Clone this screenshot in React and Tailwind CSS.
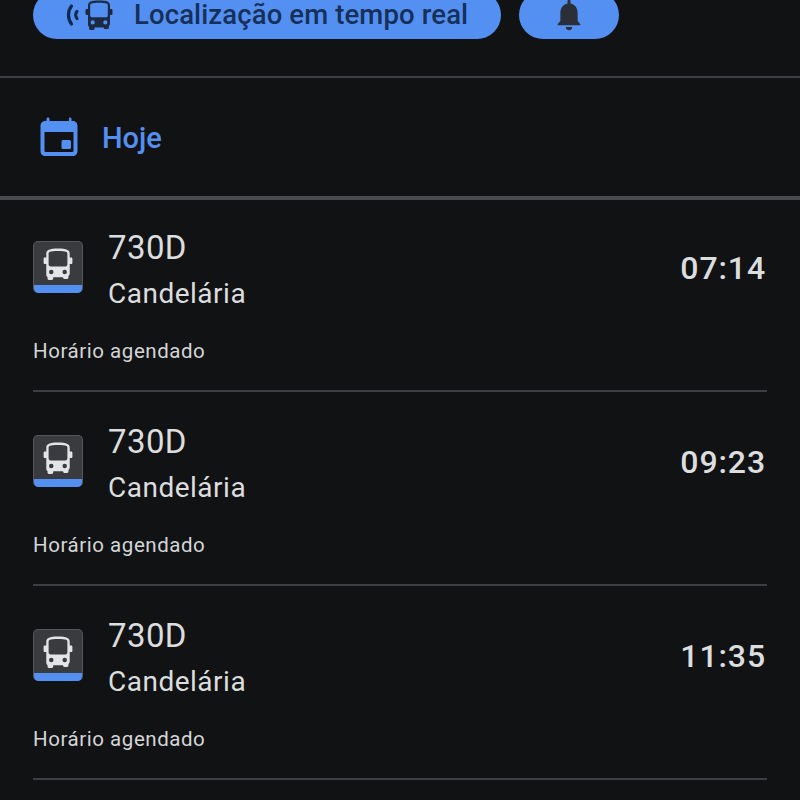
const trips = [
  { time: "07:14" },
  { time: "09:23" },
  { time: "11:35" },
];

function BusGlyph({ className }) {
  return (
    <svg viewBox="0 0 30 30" className={className} fill="currentColor">
      <path
        fillRule="evenodd"
        d="M15 .5C7 .5 4 1.800 4 5.500V9H2.700C2 9 1.500 9.500 1.500 10.200v3.600c0 .7.5 1.200 1.200 1.200H4v9.500c0 1.200.4 2.100 1.200 2.800v1.400c0 .7.5 1.300 1.300 1.300h2.700c.7 0 1.300-.6 1.300-1.300V27.500h9.200v.2c0 .7.6 1.300 1.300 1.300h2.500c.8 0 1.300-.6 1.300-1.300v-1.400c.8-.7 1.200-1.600 1.200-2.800V15h1.300c.7 0 1.200-.5 1.200-1.200v-3.600c0-.7-.5-1.200-1.200-1.200H26V5.500C26 1.800 23 .5 15 .5zM7.500 3.500c1.200-.5 3.800-.8 7.500-.8s6.300.3 7.500.8c.9.4 1.300 1 1.300 1.900v10.100c0 1-.8 1.800-1.800 1.800H8c-1 0-1.800-.8-1.800-1.800V5.400c0-.9.4-1.500 1.300-1.900zM8.700 20.300a2.100 2.100 0 1 1 0 4.200 2.100 2.100 0 0 1 0-4.200zm12.600 0a2.100 2.100 0 1 1 0 4.200 2.100 2.100 0 0 1 0-4.200z"
      />
    </svg>
  );
}

function TripRow({ time }) {
  return (
    <div className="h-[194px] mx-[33px] border-b-2 border-[#3d3e42] flex flex-col">
      <div className="flex items-start pt-[29px]">
        <div className="mt-[14px] w-[50px] h-[52px] rounded-[5px] bg-[#3a3b3f] overflow-hidden flex flex-col border border-[#55565a] border-b-0">
          <div className="flex-1 flex items-center justify-center text-[#e3e4e6]">
            <BusGlyph className="w-[32px] h-[32px]" />
          </div>
          <div className="h-[8px] bg-[#5490f2]" />
        </div>
        <div className="ml-[25px] flex-1 flex flex-col">
          <div className="text-[33px] leading-[42px] text-[#dcddde] tracking-[0.4px]">730D</div>
          <div className="text-[28px] leading-[50px] text-[#dcddde] tracking-[0.5px]">Candelária</div>
        </div>
        <div className="mt-[19px] text-[32px] leading-[44px] text-[#dcddde] font-medium tracking-[0.9px] pr-[1px]">{time}</div>
      </div>
      <div className="mt-[17px] text-[20.5px] leading-[30px] text-[#d4d5d7] tracking-[0.55px]">Horário agendado</div>
    </div>
  );
}

export default function App() {
  return (
    <div className="w-[800px] h-[800px] overflow-hidden bg-[#111213]" style={{ fontFamily: "Roboto, sans-serif" }}>
      {/* Top buttons, cropped by the top edge */}
      <div className="flex gap-[18px] pl-[33px] -mt-[9px] h-[85px]">
        <div className="w-[468px] h-[48px] rounded-[24px] bg-[#5490f2] flex items-center pl-[33px] text-[#10294f]">
          <svg viewBox="0 0 14 24" className="w-[14px] h-[24px] mr-[4px] -mt-[1px]" fill="none" stroke="currentColor" strokeLinecap="round">
            <path d="M5.500 3C1.500 8 1.500 16 5.500 21" strokeWidth="3.200" />
            <path d="M11 8.500C9.300 10.500 9.300 13.500 11 15.500" strokeWidth="3.200" />
          </svg>
          <BusGlyph className="w-[30px] h-[30px] text-[#1c2a44]" />
          <span className="ml-[20px] text-[27.5px] leading-[26px] font-medium text-[#16305a] tracking-[0.12px]">Localização em tempo real</span>
        </div>
        <div className="w-[100px] h-[48px] rounded-[24px] bg-[#5490f2] flex items-center justify-center text-[#2b2f38]">
          <svg viewBox="0 0 24 30" className="w-[28px] h-[36px] mt-[1px]" fill="currentColor">
            <path d="M12 1c-.8 0-1.300.6-1.300 1.300v1.900C6.700 5 4.600 8.300 4.600 12.400v6.600L2.300 22c-.3.400 0 1 .5 1h18.400c.5 0 .8-.6.5-1l-2.300-3v-6.600c0-4.100-2.100-7.400-6.100-8.200V2.300C13.300 1.600 12.800 1 12 1z" />
            <path d="M9.300 24.500h5.400a2.700 2.700 0 0 1-5.400 0z" />
          </svg>
        </div>
      </div>

      <div className="h-[2px] bg-[#3f4044]" />

      {/* Date row */}
      <div className="h-[118px] flex items-center pl-[38px]">
        <svg viewBox="0 0 42 42" className="w-[42px] h-[42px]" fill="#5490f2">
          <path
            fillRule="evenodd"
            d="M10 1.500c-1 0-1.500.7-1.500 1.500v2H7.500C4.500 5 2.500 7 2.500 10v25c0 3 2 5 5 5h27c3 0 5-2 5-5V10c0-3-2-5-5-5h-1V3c0-.8-.5-1.500-1.500-1.500S31 2.200 31 3v2H11.500V3c0-.8-.5-1.500-1.500-1.500zM6.500 16h29v18.500c0 1-.7 1.500-1.500 1.500H8c-.8 0-1.500-.5-1.500-1.500V16z"
          />
          <rect x="23.500" y="24" width="9.500" height="9" rx="1.500" />
        </svg>
        <span className="ml-[22px] mt-[2px] text-[29px] leading-[40px] font-medium text-[#5490f2]">Hoje</span>
      </div>

      <div className="h-[4px] bg-[#4a4b4e]" />

      <div className="-mt-[2px]">
        {trips.map((t) => (
          <TripRow key={t.time} time={t.time} />
        ))}
      </div>
    </div>
  );
}
